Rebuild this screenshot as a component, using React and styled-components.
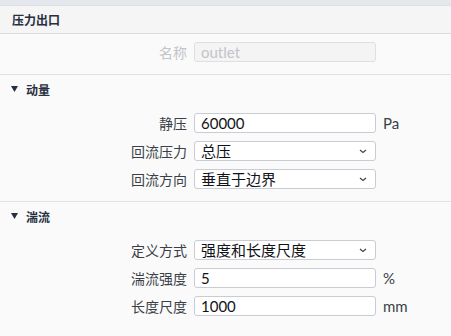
import React from 'react';
import styled, { createGlobalStyle } from 'styled-components';

const Global = createGlobalStyle`
  body {
    margin: 0;
    background: #fafafa;
    font-family: Lato, "Noto Sans CJK SC", sans-serif;
  }
`;

const Page = styled.div`
  width: 451px;
  height: 336px;
  overflow: hidden;
  background: #fafafa;
`;

const TopStrip = styled.div`
  height: 5px;
  background: #e4e7eb;
  border-bottom: 1px solid #dcdfe3;
`;

const Header = styled.div`
  height: 27px;
  display: flex;
  align-items: center;
  padding-left: 12px;
  background: #f5f5f5;
  border-bottom: 1px solid #dcdcdc;
  font-family: "Noto Sans CJK SC", sans-serif;
  font-weight: 700;
  font-size: 12px;
  color: #27303f;
`;

const Section = styled.div`
  padding: ${p => (p.$top ? '8px' : '0')} 0 12px;
  border-bottom: ${p => (p.$last ? 'none' : '1px solid #e2e2e2')};
`;

const SectionTitle = styled.div`
  height: 28px;
  margin-bottom: 10px;
  display: flex;
  align-items: center;
  gap: 8px;
  padding-left: 11px;
  font-family: "Noto Sans CJK SC", sans-serif;
  font-weight: 700;
  font-size: 12px;
  color: #27303f;
`;

const Rows = styled.div`
  display: grid;
  grid-template-columns: 187px 182px auto;
  column-gap: 7px;
  row-gap: 8px;
  align-items: center;
`;

const Label = styled.div`
  text-align: right;
  font-family: "Noto Sans CJK SC", sans-serif;
  font-size: 14px;
  line-height: 20px;
  color: ${p => (p.$muted ? '#c2c4c8' : '#3a3f48')};
`;

const Field = styled.div`
  box-sizing: border-box;
  height: 20px;
  display: flex;
  align-items: center;
  justify-content: space-between;
  padding: 0 8px 0 6px;
  border: 1px solid ${p => (p.$disabled ? '#e0e0e0' : '#c9ccd2')};
  border-radius: 3px;
  background: ${p => (p.$disabled ? '#f4f4f4' : '#ffffff')};
  color: ${p => (p.$disabled ? '#c2c4c8' : '#111318')};
  font-size: 15px;
  line-height: 18px;
  white-space: nowrap;
`;

const Unit = styled.div`
  font-size: 15px;
  line-height: 20px;
  color: #3a3f48;
`;

const Chevron = () => (
  <svg width="8" height="5" viewBox="0 0 8 5">
    <path d="M1 1 L4 3.5 L7 1" fill="none" stroke="#444" strokeWidth="1.2" />
  </svg>
);

const Triangle = () => (
  <svg width="7" height="6" viewBox="0 0 7 6">
    <path d="M0 0 H7 L3.5 6 Z" fill="#27303f" />
  </svg>
);

const Row = ({ label, value, unit, select, disabled }) => (
  <>
    <Label $muted={disabled}>{label}</Label>
    <Field $disabled={disabled}>
      <span>{value}</span>
      {select && <Chevron />}
    </Field>
    <Unit>{unit}</Unit>
  </>
);

export default function App() {
  return (
    <Page>
      <Global />
      <TopStrip />
      <Header>压力出口</Header>
      <Section $top>
        <Rows>
          <Row label="名称" value="outlet" disabled />
        </Rows>
      </Section>
      <Section>
        <SectionTitle><Triangle />动量</SectionTitle>
        <Rows>
          <Row label="静压" value="60000" unit="Pa" />
          <Row label="回流压力" value="总压" select />
          <Row label="回流方向" value="垂直于边界" select />
        </Rows>
      </Section>
      <Section $last>
        <SectionTitle><Triangle />湍流</SectionTitle>
        <Rows>
          <Row label="定义方式" value="强度和长度尺度" select />
          <Row label="湍流强度" value="5" unit="%" />
          <Row label="长度尺度" value="1000" unit="mm" />
        </Rows>
      </Section>
    </Page>
  );
}
